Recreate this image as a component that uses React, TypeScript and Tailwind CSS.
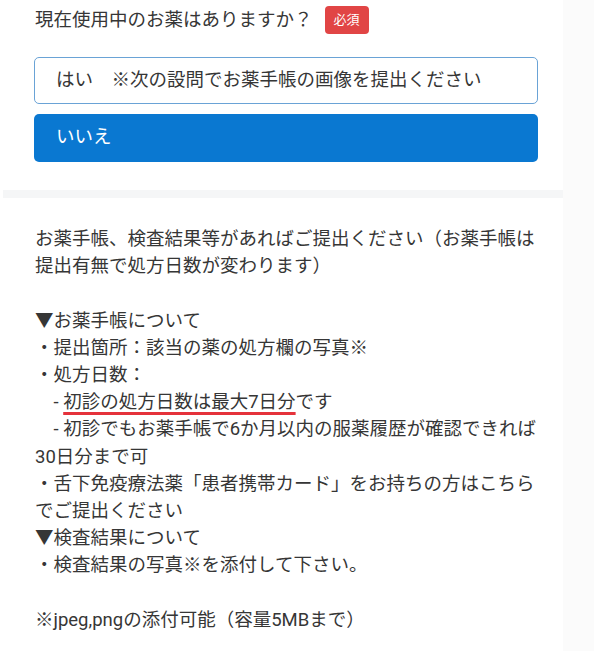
export default function App() {
  return (
    <div
      className="min-h-screen bg-[#fbfbfb] text-[#363636]"
      style={{ fontFamily: 'Roboto, "Noto Sans CJK JP", "Noto Sans", sans-serif' }}
    >
      <div className="min-h-screen w-[563px] bg-white">
        {/* Question */}
        <div className="pb-[28px] pl-[34px] pt-[6px]">
          <div className="flex items-center gap-[12px] pl-[1px]">
            <h2 className="text-[18.5px] leading-[28px]">現在使用中のお薬はありますか？</h2>
            <span className="flex h-[28px] w-[44px] items-center justify-center rounded-[4px] bg-[#e14545] text-[13px] text-white">
              必須
            </span>
          </div>
          <div className="mt-[23px] flex w-[504px] flex-col gap-[10px]">
            <button className="flex h-[47px] items-center rounded-[5px] border border-[#6aa3d6] bg-white pl-[21px] text-left text-[18.5px]">
              はい　※次の設問でお薬手帳の画像を提出ください
            </button>
            <button className="flex h-[48px] items-center rounded-[5px] bg-[#0a78d1] pl-[22px] text-left text-[18.5px] text-white">
              いいえ
            </button>
          </div>
        </div>

        <div className="ml-[3px] h-[8px] bg-[#f5f6f7]" />

        {/* Upload note */}
        <div className="w-[540px] pl-[35px] pt-[28px] text-[18.5px] leading-[27.2px]">
          <p>お薬手帳、検査結果等があればご提出ください（お薬手帳は提出有無で処方日数が変わります）</p>
          <p>&nbsp;</p>
          <p>▼お薬手帳について</p>
          <p>・提出箇所：該当の薬の処方欄の写真※</p>
          <p>・処方日数：</p>
          <p className="whitespace-pre-wrap">
            {'　- '}
            <span className="underline decoration-[#e5323b] decoration-[length:3px] underline-offset-[4px]">
              初診の処方日数は最大7日分
            </span>
            です
          </p>
          <p className="whitespace-pre-wrap">{'　- 初診でもお薬手帳で6か月以内の服薬履歴が確認できれば30日分まで可'}</p>
          <p>・舌下免疫療法薬「患者携帯カード」をお持ちの方はこちらでご提出ください</p>
          <p>▼検査結果について</p>
          <p>・検査結果の写真※を添付して下さい。</p>
          <p>&nbsp;</p>
          <p>※jpeg,pngの添付可能（容量5MBまで）</p>
        </div>
      </div>
    </div>
  )
}
